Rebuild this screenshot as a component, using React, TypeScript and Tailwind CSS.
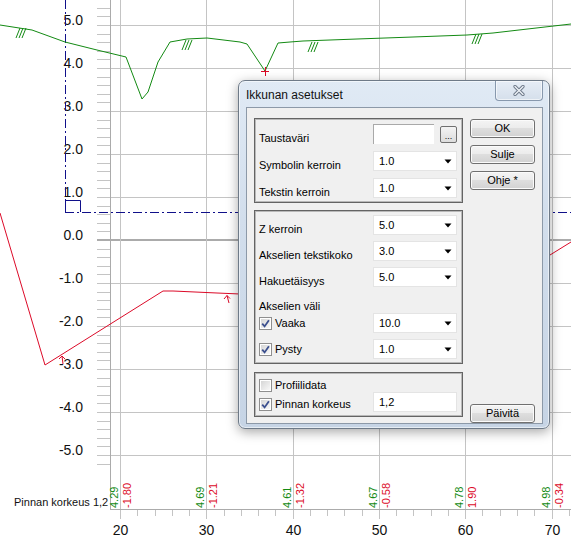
import React from "react";

const yv = (v: number) => Math.round(240 - 43 * v);
const xu = (u: number) => Math.round(120 + 8.63 * (u - 20));

const GREEN = "#138a13";
const RED = "#dc0a28";
const BLUE = "#10108a";

const bottomLabels: { u: number; g: string; r: string }[] = [
  { u: 20, g: "4.29", r: "-1.80" },
  { u: 30, g: "4.69", r: "-1.21" },
  { u: 40, g: "4.61", r: "-1.32" },
  { u: 50, g: "4.67", r: "-0.58" },
  { u: 60, g: "4.78", r: "1.90" },
  { u: 70, g: "4.98", r: "-0.34" },
];

function Hatch({ cx, cy }: { cx: number; cy: number }) {
  return (
    <g stroke={GREEN} strokeWidth={1}>
      {[0, 1, 2].map((i) => (
        <line key={i} x1={cx - 5 + i * 3} y1={cy + 5} x2={cx - 1 + i * 3} y2={cy - 5} />
      ))}
    </g>
  );
}

function Chart() {
  const majors = [5, 4, 3, 2, 1, 0, -1, -2, -3, -4, -5];
  const minors: number[] = [];
  for (let k = 29; k >= -26; k--) {
    if (k % 5 !== 0) minors.push(k / 5);
  }
  const gridU = [20, 30, 40, 50, 60, 70];
  const minorU: number[] = [];
  for (let u = 22; u <= 72; u += 2) if (u % 10 !== 0) minorU.push(u);

  const green =
    "0,25 32,30 65,42 97,50 126,57 142,99 148,92 158,62 170,42 187,39 207,38 240,42 247,44 265,71 278,43 290,42 303,41 357,39 413,37 467,35 493,33 571,24";
  const red = "0,213 45,365 163,291 173,291 217,293 240,294 550,255 571,242";

  return (
    <svg width={571} height={540} className="block" style={{ fontFamily: "'Liberation Sans', Arial, sans-serif" }}>
      <rect x={0} y={0} width={571} height={540} fill="#ffffff" />
      {/* horizontal grid */}
      {majors.map((v) =>
        v === 0 ? null : (
          <line key={"h" + v} x1={97} x2={571} y1={yv(v) + 0.5} y2={yv(v) + 0.5} stroke="#c4c4c4" />
        )
      )}
      <line x1={97} x2={571} y1={240} y2={240} stroke="#ababab" strokeWidth={2} />
      {minors.map((v) => (
        <line key={"m" + v} x1={97} x2={110} y1={Math.round(240 - 43 * v) + 0.5} y2={Math.round(240 - 43 * v) + 0.5} stroke="#c4c4c4" />
      ))}
      {/* vertical grid */}
      {gridU.map((u) => (
        <line key={"v" + u} x1={xu(u) + 0.5} x2={xu(u) + 0.5} y1={0} y2={519} stroke="#c4c4c4" />
      ))}
      {minorU.map((u) => (
        <line key={"mu" + u} x1={xu(u) + 0.5} x2={xu(u) + 0.5} y1={509} y2={516} stroke="#c4c4c4" />
      ))}
      <line x1={110.5} x2={110.5} y1={0} y2={510} stroke="#ababab" />
      <line x1={110} x2={571} y1={509.5} y2={509.5} stroke="#ababab" />

      {/* left labels */}
      {majors.map((v) => (
        <text key={"l" + v} x={83} y={yv(v)} textAnchor="end" fontSize={14} fill="#111">
          {v.toFixed(1)}
        </text>
      ))}
      {/* bottom labels */}
      {gridU.map((u) => (
        <text key={"b" + u} x={xu(u) + 0.5} y={535} textAnchor="middle" fontSize={14} fill="#111">
          {u}
        </text>
      ))}
      {bottomLabels.map((b) => (
        <g key={"r" + b.u} fontSize={11}>
          <text transform={`translate(${xu(b.u) - 2},508) rotate(-90)`} fill={GREEN}>
            {b.g}
          </text>
          <text transform={`translate(${xu(b.u) + 11},508) rotate(-90)`} fill={RED}>
            {b.r}
          </text>
        </g>
      ))}
      <text x={14} y={506} fontSize={11} fill="#111">
        Pinnan korkeus 1,2
      </text>

      {/* blue dash-dot */}
      <g stroke={BLUE} fill="none" strokeWidth={1}>
        <line x1={65.5} x2={65.5} y1={0} y2={212} strokeDasharray="9 3 2 3" />
        <line x1={65} x2={571} y1={212.5} y2={212.5} strokeDasharray="9 3 2 3" />
        <path d="M65.5 212 V200.5 H80.5 V212" />
      </g>

      {/* green profile */}
      <polyline points={green} fill="none" stroke={GREEN} strokeWidth={1} />
      <Hatch cx={21} cy={33} />
      <Hatch cx={187} cy={45} />
      <Hatch cx={313} cy={47} />
      <Hatch cx={477} cy={39} />

      {/* red profile */}
      <polyline points={red} fill="none" stroke={RED} strokeWidth={1} />
      <g stroke={RED} fill="none" strokeWidth={1}>
        <path d="M224 299 L227 295.5 L230 298.5 M227 295.5 L229 303" />
        <path d="M59 359 L62 356 L65 359 M62 356 L63 364" />
        <path d="M261 71.5 H269 M265.5 67 V76" />
      </g>
    </svg>
  );
}

function Dropdown({ value }: { value: string }) {
  return (
    <div className="w-[84px] h-[20px] bg-white border border-[#e4e4e4] flex items-center justify-between pl-[5px] pr-[4px]">
      <span className="leading-[13px]">{value}</span>
      <svg width="8" height="5" viewBox="0 0 8 5">
        <path d="M0.5 0.5 H7.5 L4 4.5 Z" fill="#000" />
      </svg>
    </div>
  );
}

function Check({ on }: { on?: boolean }) {
  return (
    <span className="w-[13px] h-[13px] border border-[#8f8f8f] bg-white p-[1px] flex shrink-0">
      <span className="flex-1 bg-gradient-to-br from-[#d6d6d6] to-[#f8f8f8] flex items-center justify-center">
        {on && (
          <svg width="9" height="9" viewBox="0 0 9 9">
            <path d="M1.2 4.6 L3.6 7.4 L7.9 1.3" fill="none" stroke="#3b4f8e" strokeWidth={1.8} />
          </svg>
        )}
      </span>
    </span>
  );
}

function Btn({ children }: { children: React.ReactNode }) {
  return (
    <div className="h-[19px] w-[65px] rounded-[3px] border border-[#707070] bg-[linear-gradient(to_bottom,#f4f4f4,#ececec_45%,#dedede_50%,#d2d2d2)] shadow-[inset_0_0_0_1px_#fbfbfb] flex items-center justify-center leading-[13px]">
      {children}
    </div>
  );
}

function Row({ label, children }: { label: string; children: React.ReactNode }) {
  return (
    <div className="h-[20px] flex items-center justify-between">
      <span className="pt-[8px] leading-[13px]">{label}</span>
      {children}
    </div>
  );
}

function Group({ className, children }: { className: string; children: React.ReactNode }) {
  return (
    <div className={"border border-[#646464] shadow-[inset_0_0_0_1px_#b9b9b9] flex flex-col " + className}>
      {children}
    </div>
  );
}

function Dialog() {
  return (
    <div className="absolute left-[238px] top-[80px] w-[312px] h-[349px] rounded-[7px] border border-[#6e7a88] bg-[linear-gradient(to_bottom,#e0eaf5,#d2deec_40%,#c6d4e5)] shadow-[0_3px_12px_rgba(0,0,0,0.35),inset_0_0_0_1px_rgba(255,255,255,0.55)] flex flex-col pl-[7px] pr-[6px] pb-[4px] text-[11px] text-black font-['Liberation_Sans',Arial,sans-serif]">
      <div className="h-[26px] flex items-start justify-between">
        <span className="pt-[7px] text-[12px] leading-[14px] text-[#111]">Ikkunan asetukset</span>
        <div className="w-[48px] h-[20px] rounded-b-[4px] border border-t-0 border-[#8798ad] bg-[linear-gradient(to_bottom,#e6edf6,#d5dfeb)] shadow-[inset_0_0_0_1px_rgba(255,255,255,0.6)] flex items-center justify-center">
          <svg width="12" height="11" viewBox="0 0 12 11">
            <path d="M2 1.5 L10 9.5 M10 1.5 L2 9.5" stroke="#6c7888" strokeWidth={3.2} strokeLinecap="round" />
            <path d="M2 1.5 L10 9.5 M10 1.5 L2 9.5" stroke="#eef2f7" strokeWidth={1.4} strokeLinecap="round" />
          </svg>
        </div>
      </div>
      <div className="flex-1 border border-[#8c99a8] bg-[#f0f0f0] flex pl-[7px] pt-[10px]">
        <div className="w-[209px] flex flex-col">
          <Group className="h-[85px] pl-[4px] pr-[5px] pt-[5px] gap-[7px]">
            <Row label="Taustaväri">
              <div className="flex items-center gap-[6px] w-[84px]">
                <div className="w-[61px] h-[20px] bg-white border-t border-l border-[#a9a9a9]" />
                <div className="w-[17px] h-[17px] rounded-[2px] border border-[#707070] bg-[linear-gradient(to_bottom,#f4f4f4,#dcdcdc)] flex items-end justify-center pb-[2px] text-[9px] leading-[8px]">
                  ...
                </div>
              </div>
            </Row>
            <Row label="Symbolin kerroin">
              <Dropdown value="1.0" />
            </Row>
            <Row label="Tekstin kerroin">
              <Dropdown value="1.0" />
            </Row>
          </Group>
          <Group className="h-[154px] mt-[7px] pl-[4px] pr-[5px] pt-[4px]">
            <Row label="Z kerroin">
              <Dropdown value="5.0" />
            </Row>
            <div className="mt-[6px]">
              <Row label="Akselien tekstikoko">
                <Dropdown value="3.0" />
              </Row>
            </div>
            <div className="mt-[6px]">
              <Row label="Hakuetäisyys">
                <Dropdown value="5.0" />
              </Row>
            </div>
            <div className="mt-[12px] h-[14px] leading-[14px]">Akselien väli</div>
            <div className="h-[20px] flex items-center justify-between">
              <span className="flex items-center gap-[3px] pt-[1px]">
                <Check on />
                <span className="leading-[13px]">Vaaka</span>
              </span>
              <Dropdown value="10.0" />
            </div>
            <div className="mt-[6px] h-[20px] flex items-center justify-between">
              <span className="flex items-center gap-[3px]">
                <Check on />
                <span className="leading-[13px]">Pysty</span>
              </span>
              <Dropdown value="1.0" />
            </div>
          </Group>
          <Group className="h-[45px] mt-[8px] pl-[4px] pr-[5px] pt-[6px]">
            <div className="h-[13px] flex items-center gap-[3px]">
              <Check />
              <span className="leading-[13px]">Profiilidata</span>
            </div>
            <div className="h-[20px] flex items-center justify-between">
              <span className="flex items-center gap-[3px] pt-[4px]">
                <Check on />
                <span className="leading-[13px]">Pinnan korkeus</span>
              </span>
              <div className="w-[84px] h-[20px] bg-white border border-[#e4e4e4] flex items-center pl-[5px]">
                <span className="leading-[13px]">1,2</span>
              </div>
            </div>
          </Group>
        </div>
        <div className="ml-[7px] w-[65px] flex flex-col pt-[1px] gap-[7px]">
          <Btn>OK</Btn>
          <Btn>Sulje</Btn>
          <Btn>Ohje *</Btn>
          <div className="mt-auto">
            <Btn>Päivitä</Btn>
          </div>
        </div>
      </div>
    </div>
  );
}

export default function App() {
  return (
    <div className="relative w-[571px] h-[540px] overflow-hidden bg-white">
      <Chart />
      <Dialog />
    </div>
  );
}
